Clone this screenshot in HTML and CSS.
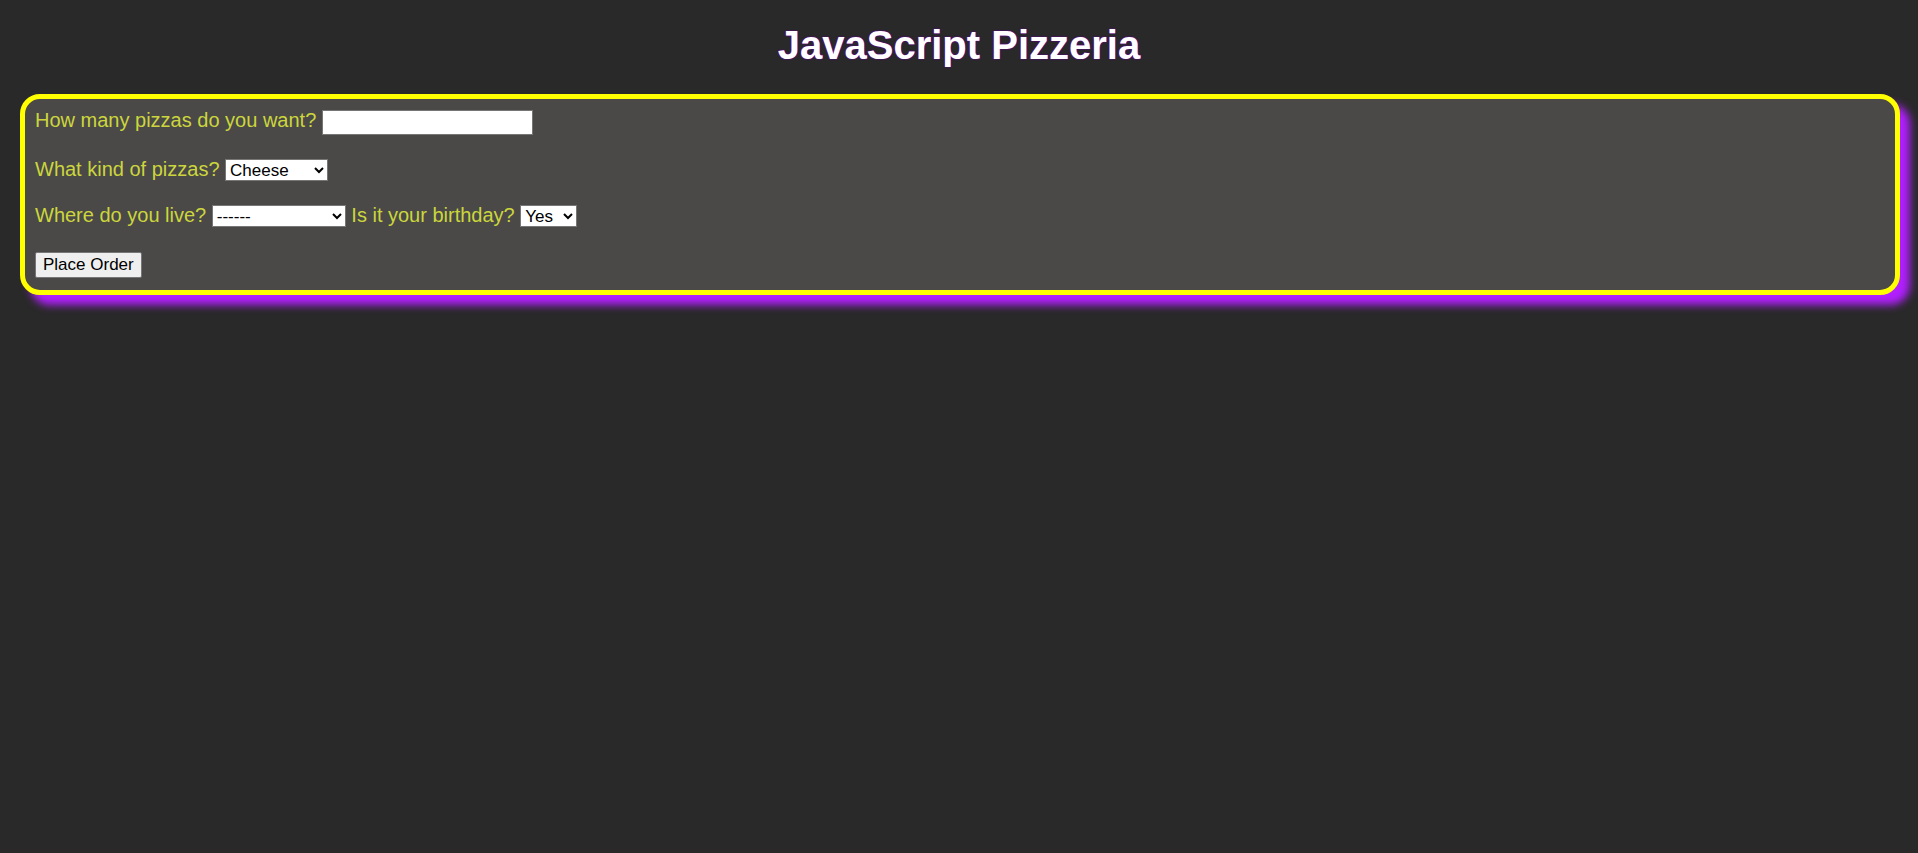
FILE: index.html
```html
<!DOCTYPE html>
<html lang="en">
<head>
<meta charset="utf-8">
<title>JavaScript Pizzeria</title>
<link rel="stylesheet" href="styles.css">
</head>
<body>
<h1 class="title">JavaScript Pizzeria</h1>
<form class="order">
  <div class="row">How many pizzas do you want? <input class="qty" type="text"></div>
  <div class="row">What kind of pizzas? <select class="sel sel-kind"><option>Cheese</option><option>Pepperoni</option><option>Veggie</option></select></div>
  <div class="row">Where do you live? <select class="sel sel-where"><option>------</option><option>Downtown</option><option>Suburbs</option></select> Is it your birthday? <select class="sel sel-bday"><option>Yes</option><option>No</option></select></div>
  <div class="row row-last"><button class="btn" type="button">Place Order</button></div>
</form>
</body>
</html>
```
FILE: styles.css
```css
html {
  background: #292929;
}

body {
  margin: 0;
  padding: 0 0 40px;
  min-height: 100vh;
  box-sizing: border-box;
  font-family: "Liberation Sans", Arial, sans-serif;
}

.title {
  margin: 0;
  padding: 22px 0 26px;
  text-align: center;
  font-size: 40px;
  font-weight: bold;
  line-height: 46px;
  color: #ffffff;
  text-shadow: 0 0 2px #3a0080, 0 0 1px #ff00ff;
}

.order {
  margin: 0 18px 0 20px;
  padding: 10px 10px 12px;
  background: #4a4948;
  border: 5px solid #ffff00;
  border-radius: 20px;
  box-shadow: 10px 10px 8px #b220ff;
  color: #ccd63c;
  font-size: 20px;
}

.row {
  margin-bottom: 23px;
}

.row-last {
  margin-top: 25px;
  margin-bottom: 0;
}

.qty {
  box-sizing: border-box;
  width: 211px;
  height: 25px;
  margin: 0;
  padding: 1px 2px;
  border: 1px solid #767676;
  background: #ffffff;
  font-family: "Liberation Sans", Arial, sans-serif;
  font-size: 17px;
}

.sel {
  box-sizing: border-box;
  height: 22px;
  margin: 0;
  border: 1px solid #767676;
  background-color: #ffffff;
  color: #000000;
  font-family: "Liberation Sans", Arial, sans-serif;
  font-size: 17px;
}

.sel-kind { width: 103px; }
.sel-where { width: 134px; }
.sel-bday { width: 57px; }

.btn {
  box-sizing: border-box;
  height: 26px;
  margin: 0;
  padding: 1px 7px;
  border: 1px solid #767676;
  border-radius: 2px;
  background: #efefef;
  color: #000000;
  font-family: "Liberation Sans", Arial, sans-serif;
  font-size: 17px;
}
```
